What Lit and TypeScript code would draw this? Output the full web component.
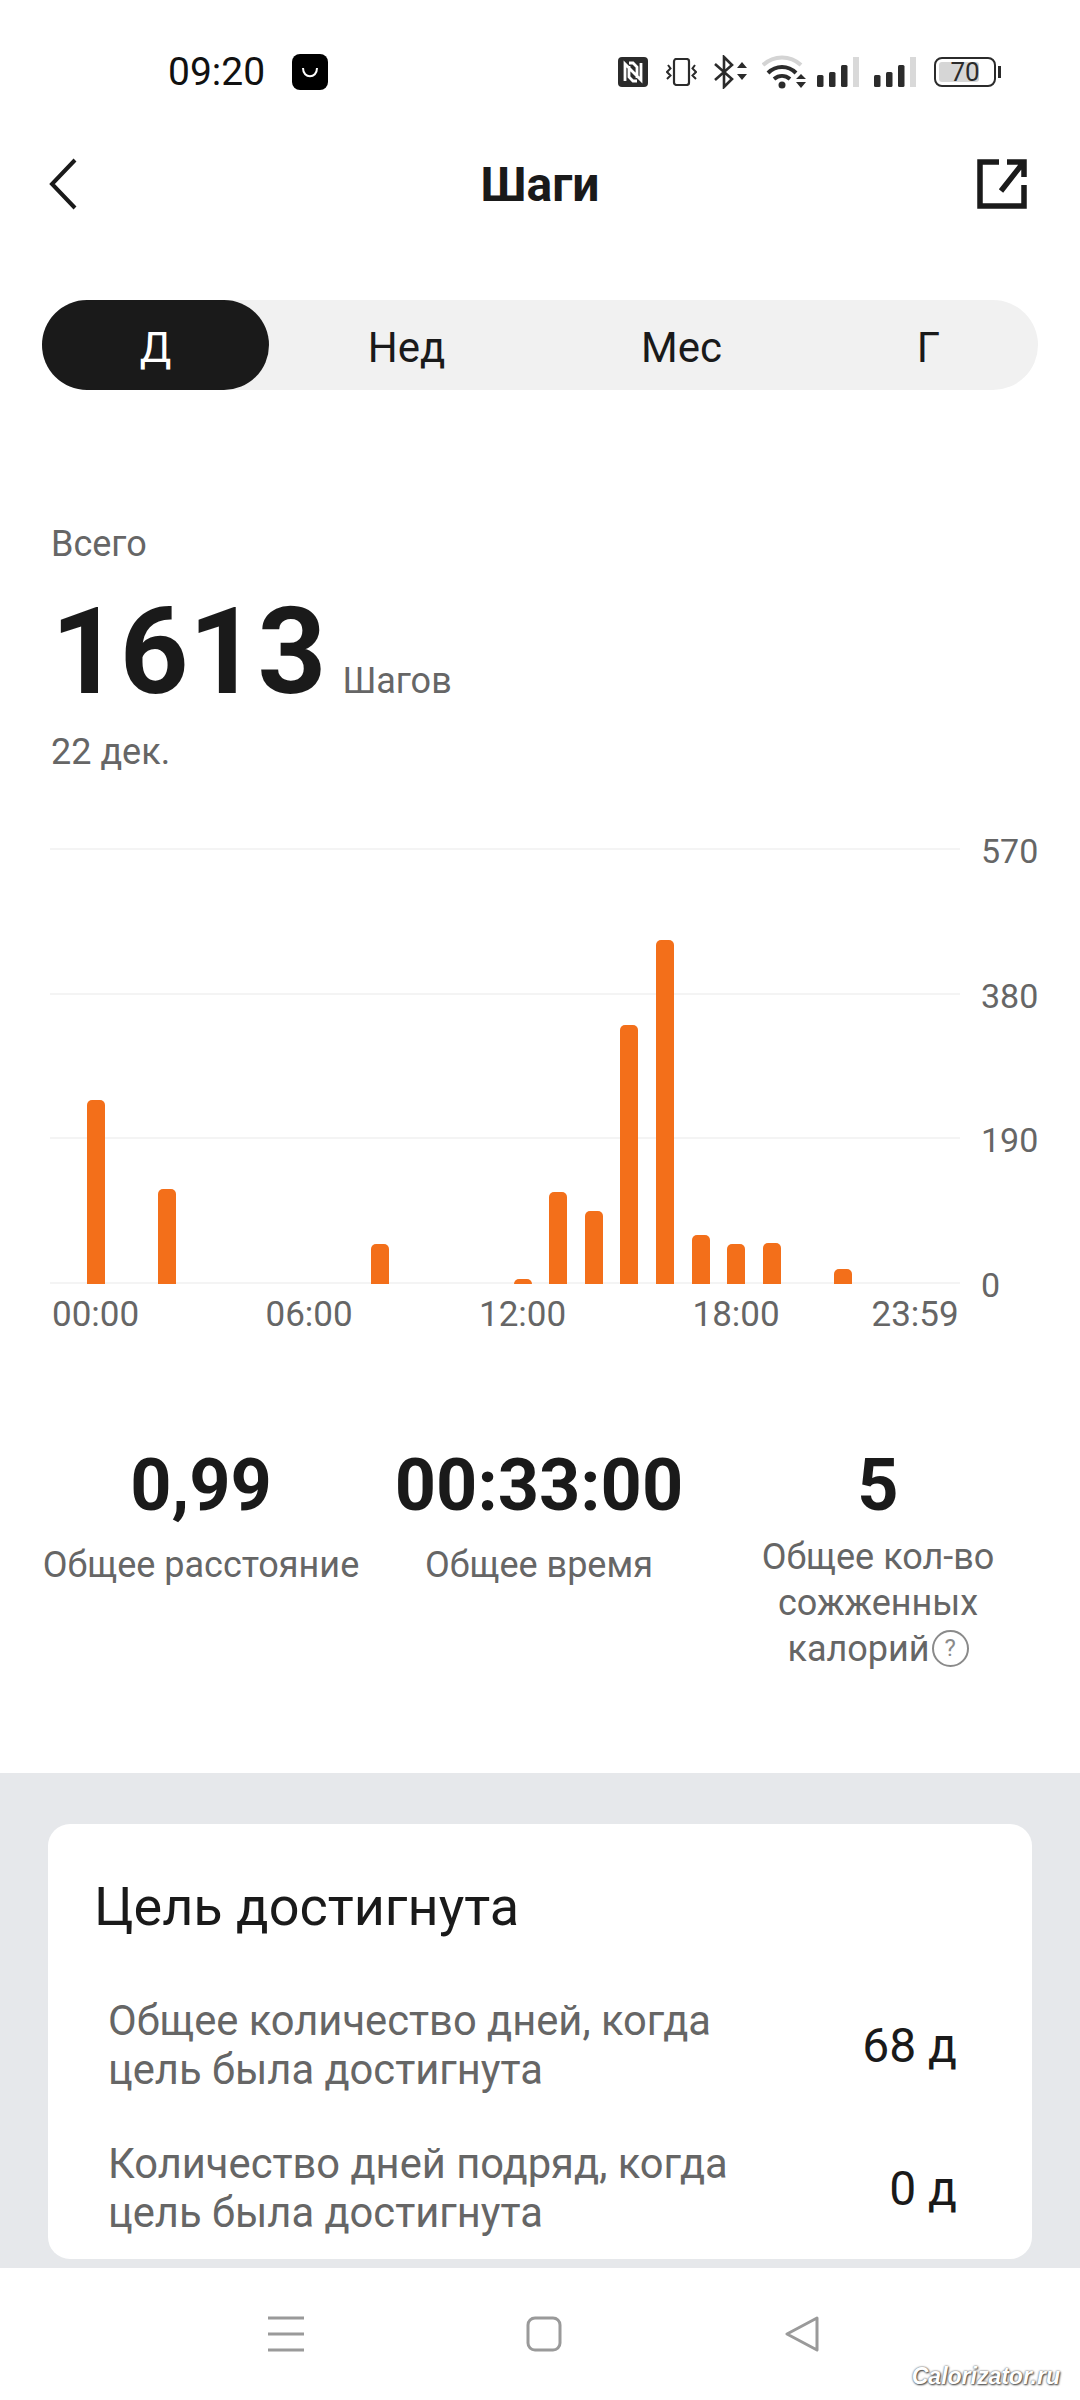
import { LitElement, html, css, svg } from 'lit';
import { customElement } from 'lit/decorators.js';

// steps per hour, drawn as pixel heights of the 436px plot
const BARS: Record<number, number> = {
  0: 184, 2: 95, 8: 40, 12: 5, 13: 92, 14: 73, 15: 259, 16: 344, 17: 49, 18: 40, 19: 41, 21: 15,
};
const Y_LABELS = ['570', '380', '190', '0'];
const X_LABELS = ['00:00', '06:00', '12:00', '18:00', '23:59'];

const signal = svg`
  <rect x="0" y="18" width="6.5" height="12" rx="1.5" fill="#2b2b2b"/>
  <rect x="12" y="15" width="6.5" height="15" rx="1.5" fill="#2b2b2b"/>
  <rect x="24" y="8" width="6.5" height="22" rx="1.5" fill="#2b2b2b"/>
  <rect x="36" y="0" width="6" height="30" fill="#d9d9d9"/>`;

@customElement('app-root')
export class AppRoot extends LitElement {
  static styles = css`
    :host {
      display: block;
      position: relative;
      width: 1080px;
      height: 2400px;
      overflow: hidden;
      background: #fff;
      color: #1a1a1a;
      font-family: Roboto, "Noto Sans", sans-serif;
    }
    .status {
      height: 144px;
      box-sizing: border-box;
      padding: 54px 79px 0 168px;
      display: flex;
      align-items: flex-start;
    }
    .time {
      font-size: 39px;
      line-height: 36px;
      color: #111;
      width: 124px;
    }
    .status-icons {
      margin-left: auto;
      display: flex;
      align-items: center;
      height: 36px;
    }
    .status svg { display: block; }
    .header {
      height: 80px;
      padding: 0 53px 0 49px;
      display: flex;
      align-items: center;
      justify-content: space-between;
      position: relative;
    }
    .title {
      position: absolute;
      left: 0;
      right: 0;
      top: 1px;
      text-align: center;
      font-size: 48px;
      line-height: 80px;
      font-weight: 700;
    }
    .tabs {
      margin: 76px 42px 0;
      height: 90px;
      border-radius: 45px;
      background: #f1f1f1;
      display: grid;
      grid-template-columns: 227px 275px 275px 219px;
      align-items: center;
      text-align: center;
      font-size: 42px;
    }
    .tab { height: 90px; line-height: 96px; }
    .tab.active {
      background: #1a1a1a;
      color: #fff;
      border-radius: 45px;
    }
    .summary {
      padding: 134px 0 0 51px;
      color: #666;
    }
    .label { font-size: 36px; line-height: 40px; }
    .total {
      display: flex;
      align-items: baseline;
      height: 140px;
      margin-top: 18px;
    }
    .total b {
      font-size: 120px;
      line-height: 140px;
      color: #1a1a1a;
      font-weight: 700;
    }
    .total span { font-size: 36px; margin-left: 16px; }
    .date { font-size: 36px; line-height: 40px; margin-top: 10px; }
    .chart {
      margin: 76px 0 0 50px;
      position: relative;
      height: 436px;
    }
    .ticks {
      height: 100%;
      display: flex;
      flex-direction: column;
      justify-content: space-between;
    }
    .tick { display: flex; align-items: center; height: 2px; }
    .tick i { display: block; width: 910px; height: 2px; background: #f4f4f4; }
    .tick span {
      margin-left: 21px;
      font-size: 34px;
      line-height: 2px;
      padding-top: 4px;
      color: #666;
    }
    .bars {
      position: absolute;
      left: 28px;
      bottom: 0;
      width: 854px;
      height: 100%;
      display: flex;
      align-items: flex-end;
    }
    .slot { flex: 1; display: flex; justify-content: center; }
    .bar {
      width: 18px;
      background: #f36f1a;
      border-radius: 5px 5px 0 0;
    }
    .x-axis {
      margin: 10px 0 0 52px;
      display: grid;
      grid-template-columns: repeat(3, 213.5px) 179px auto;
      font-size: 35px;
      line-height: 42px;
      color: #666;
    }
    .stats {
      height: 437px;
      box-sizing: border-box;
      padding-top: 109px;
      display: grid;
      grid-template-columns: 402px 274px 404px;
      text-align: center;
    }
    .stat {
      display: flex;
      flex-direction: column;
      align-items: center;
      min-width: 0;
    }
    .stat b {
      font-size: 72px;
      line-height: 82px;
      font-weight: 700;
      white-space: nowrap;
    }
    .stat span {
      margin-top: 15px;
      font-size: 36px;
      line-height: 46px;
      color: #666;
    }
    .stat:nth-child(3) span { margin-top: 7px; width: 300px; }
    .help {
      display: inline-block;
      box-sizing: border-box;
      width: 37px;
      height: 37px;
      margin-left: 2px;
      border: 2.5px solid #8a8a8a;
      border-radius: 50%;
      font-size: 24px;
      font-style: normal;
      line-height: 32px;
      color: #8a8a8a;
      vertical-align: 5px;
    }
    .lower {
      background: #e6e8eb;
      height: 495px;
      box-sizing: border-box;
      padding: 51px 48px 0 48px;
    }
    .card {
      background: #fff;
      border-radius: 22px;
      height: 435px;
      box-sizing: border-box;
      padding: 53px 75px 0 46px;
    }
    .card h2 {
      margin: 0 0 59px;
      font-size: 54px;
      line-height: 60px;
      font-weight: 400;
      color: #1a1a1a;
    }
    .row {
      display: flex;
      align-items: center;
      justify-content: space-between;
      padding-left: 14px;
      margin-bottom: 45px;
    }
    .row p {
      margin: 0;
      font-size: 41.7px;
      line-height: 49px;
      color: #666;
    }
    .row span { font-size: 48px; color: #1a1a1a; }
    .nav {
      height: 133px;
      background: #fff;
      display: flex;
      padding: 48px 0 0 268px;
      box-sizing: border-box;
    }
    .nav svg { display: block; margin-right: 222px; }
    .watermark {
      position: absolute;
      right: 20px;
      bottom: 10px;
      font: italic 700 23px "Liberation Sans", sans-serif;
      color: #fff;
      text-shadow: 0 0 2px #444, 1px 1px 2px #444;
    }
  `;

  private renderStatusIcons() {
    return html`
      <div class="status-icons">
        <svg width="30" height="30" viewBox="0 0 30 30" style="margin-right:18px">
          <rect width="30" height="30" rx="4" fill="#2b2b2b"/>
          <path d="M7 24V7l8 8M23 6v17l-8-8M11 6h4l4 4v11M19 24h-4l-4-4V9" fill="none" stroke="#fff" stroke-width="2.8"/>
        </svg>
        <svg width="31" height="28" viewBox="0 0 31 28" style="margin-right:17px">
          <rect x="8" y="1" width="15" height="26" rx="2.5" fill="none" stroke="#2b2b2b" stroke-width="2.2"/>
          <path d="M2 7l2.5 3.5L1 14l3.5 3.5L1 21M29 7l-2.5 3.5L30 14l-3.5 3.5L30 21" fill="none" stroke="#2b2b2b" stroke-width="2"/>
        </svg>
        <svg width="33" height="34" viewBox="0 0 33 34" style="margin-right:15px">
          <path d="M1 9l17 15-8 8V2l8 8L1 25" fill="none" stroke="#2b2b2b" stroke-width="2.6"/>
          <path d="M23 13l5-6 5 6zM23 19h10l-5 6z" fill="#2b2b2b"/>
        </svg>
        <svg width="45" height="34" viewBox="0 0 45 34" style="margin-right:10px">
          <path d="M1 10C12 0 28 0 39 10" fill="none" stroke="#d4d4d4" stroke-width="4"/>
          <path d="M6 18C14 10 26 10 34 18M12 24c5-4 11-4 16 0" fill="none" stroke="#2b2b2b" stroke-width="4"/>
          <circle cx="20" cy="30" r="3.5" fill="#2b2b2b"/>
          <path d="M34 24l5-5 5 5zM34 27h10l-5 6z" fill="#2b2b2b"/>
        </svg>
        <svg width="44" height="30" viewBox="0 0 44 30" style="margin-right:13px">${signal}</svg>
        <svg width="44" height="30" viewBox="0 0 44 30" style="margin-right:16px">${signal}</svg>
        <svg width="67" height="30" viewBox="0 0 67 30">
          <rect x="5" y="5" width="40" height="20" rx="3" fill="#d6d6d6"/>
          <rect x="1" y="1" width="60" height="28" rx="7" fill="none" stroke="#2b2b2b" stroke-width="2"/>
          <rect x="64" y="9" width="3" height="12" fill="#2b2b2b"/>
          <text x="31" y="24" text-anchor="middle" font-size="26" fill="#2b2b2b">70</text>
        </svg>
      </div>`;
  }

  private renderChart() {
    return html`
      <div class="chart">
        <div class="ticks">
          ${Y_LABELS.map(l => html`<div class="tick"><i></i><span>${l}</span></div>`)}
        </div>
        <div class="bars">
          ${Array.from({ length: 24 }, (_, h) => html`
            <div class="slot">
              ${BARS[h] ? html`<div class="bar" style="height:${BARS[h]}px"></div>` : ''}
            </div>`)}
        </div>
      </div>
      <div class="x-axis">${X_LABELS.map(l => html`<span>${l}</span>`)}</div>`;
  }

  render() {
    return html`
      <div class="status">
        <div class="time">09:20</div>
        <svg width="36" height="36" viewBox="0 0 36 36">
          <rect width="36" height="36" rx="8" fill="#000"/>
          <path d="M11 14c0 11 14 11 14 0" fill="none" stroke="#fff" stroke-width="2"/>
        </svg>
        ${this.renderStatusIcons()}
      </div>

      <div class="header">
        <svg width="28" height="52" viewBox="0 0 28 52">
          <path d="M26 2L3 26l23 24" fill="none" stroke="#1a1a1a" stroke-width="4"/>
        </svg>
        <div class="title">Шаги</div>
        <svg width="50" height="50" viewBox="0 0 50 50">
          <path d="M22 3H3v44h44V26M47 18V3H30M46 4L24 32" fill="none" stroke="#1a1a1a" stroke-width="5.5"/>
        </svg>
      </div>

      <div class="tabs">
        <div class="tab active">Д</div>
        <div class="tab">Нед</div>
        <div class="tab">Мес</div>
        <div class="tab">Г</div>
      </div>

      <div class="summary">
        <div class="label">Всего</div>
        <div class="total"><b>1613</b><span>Шагов</span></div>
        <div class="date">22 дек.</div>
      </div>

      ${this.renderChart()}

      <div class="stats">
        <div class="stat"><b>0,99</b><span>Общее расстояние</span></div>
        <div class="stat"><b>00:33:00</b><span>Общее время</span></div>
        <div class="stat">
          <b>5</b>
          <span>Общее кол-во сожженных калорий<i class="help">?</i></span>
        </div>
      </div>

      <div class="lower">
        <div class="card">
          <h2>Цель достигнута</h2>
          <div class="row">
            <p>Общее количество дней, когда<br>цель была достигнута</p>
            <span>68 д</span>
          </div>
          <div class="row">
            <p>Количество дней подряд, когда<br>цель была достигнута</p>
            <span>0 д</span>
          </div>
        </div>
      </div>

      <div class="nav">
        <svg width="36" height="36" viewBox="0 0 36 36">
          <path d="M0 2h36M0 18h36M0 34h36" stroke="#9a9a9a" stroke-width="3"/>
        </svg>
        <svg width="36" height="36" viewBox="0 0 36 36">
          <rect x="2" y="2" width="32" height="32" rx="7" fill="none" stroke="#9a9a9a" stroke-width="3"/>
        </svg>
        <svg width="36" height="36" viewBox="0 0 36 36">
          <path d="M33 2L3 18l30 16z" fill="none" stroke="#9a9a9a" stroke-width="3" stroke-linejoin="round"/>
        </svg>
      </div>
      <div class="watermark">Calorizator.ru</div>
    `;
  }
}
